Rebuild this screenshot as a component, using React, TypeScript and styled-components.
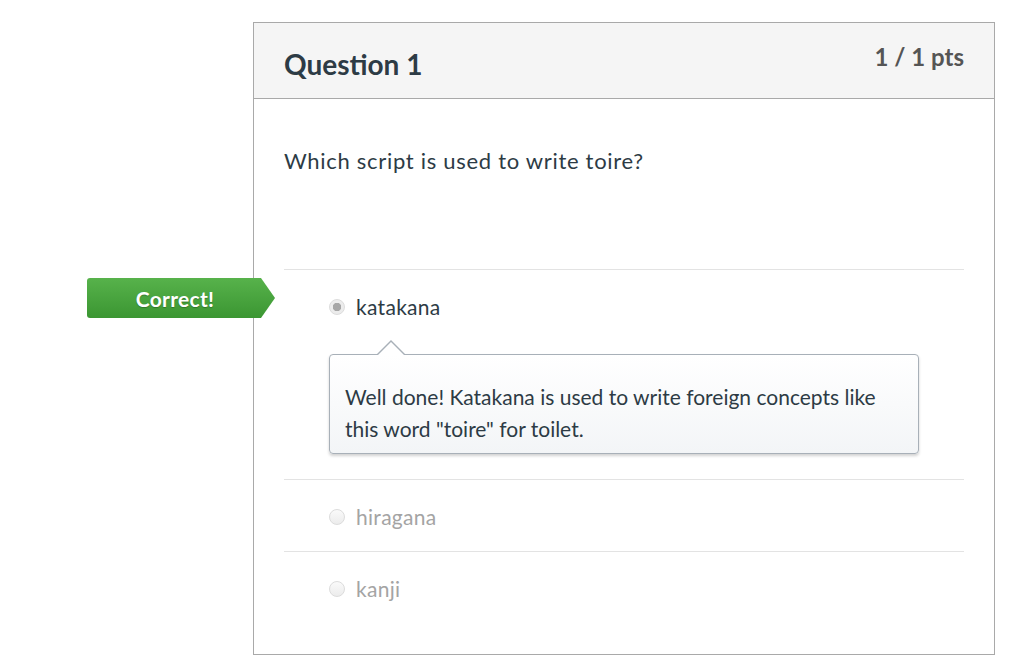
import styled, { createGlobalStyle } from 'styled-components';

const GlobalStyle = createGlobalStyle`
  html, body {
    margin: 0;
    padding: 0;
    background: #fff;
  }
  body {
    font-family: 'Lato', 'Liberation Sans', sans-serif;
    color: #2d3b45;
  }
`;

interface answerType {
  id: number;
  text: string;
  selected: boolean;
  comment?: string;
}

const answers: answerType[] = [
  {
    id: 1,
    text: 'katakana',
    selected: true,
    comment:
      'Well done! Katakana is used to write foreign concepts like this word "toire" for toilet.',
  },
  { id: 2, text: 'hiragana', selected: false },
  { id: 3, text: 'kanji', selected: false },
];

export default function App() {
  return (
    <>
      <GlobalStyle />
      <Page>
        <Card>
          <Header>
            <Title>Question 1</Title>
            <Points>1 / 1 pts</Points>
          </Header>
          <Body>
            <QuestionText>Which script is used to write toire?</QuestionText>
            <AnswerList>
              {answers.map((a) => (
                <AnswerRow key={a.id}>
                  {a.selected && <CorrectBadge>Correct!</CorrectBadge>}
                  <Label $selected={a.selected}>
                    <Radio $selected={a.selected} />
                    {a.text}
                  </Label>
                  {a.comment && <Comment>{a.comment}</Comment>}
                </AnswerRow>
              ))}
            </AnswerList>
          </Body>
        </Card>
      </Page>
    </>
  );
}

const Page = styled.div`
  padding: 22px 0 0 253px;
`;

const Card = styled.div`
  width: 740px;
  height: 631px;
  border: 1px solid #a9a9a9;
  background: #fff;
`;

const Header = styled.div`
  height: 76px;
  box-sizing: border-box;
  background: #f5f5f5;
  border-bottom: 1px solid #a9a9a9;
  display: flex;
  justify-content: space-between;
  padding: 0 30px;
`;

const Title = styled.div`
  font-size: 28px;
  font-weight: 700;
  color: #2d3b45;
  padding-top: 24px;
  line-height: 34px;
`;

const Points = styled.div`
  font-size: 24px;
  font-weight: 700;
  color: #555;
  padding-top: 20px;
  line-height: 28px;
`;

const Body = styled.div`
  padding: 0 30px;
`;

const QuestionText = styled.div`
  font-size: 22px;
  letter-spacing: 0.7px;
  line-height: 28px;
  padding-top: 48px;
  height: 122px;
`;

const AnswerList = styled.div`
  display: flex;
  flex-direction: column;
`;

const AnswerRow = styled.div`
  position: relative;
  border-top: 1px solid #e3e3e3;
  padding: 23px 0 20px 45px;
`;

const Label = styled.div<{ $selected: boolean }>`
  display: flex;
  align-items: center;
  gap: 11px;
  font-size: 21px;
  letter-spacing: 0.3px;
  line-height: 28px;
  color: ${({ $selected }) => ($selected ? '#2d3b45' : '#a4a4a4')};
`;

const Radio = styled.span<{ $selected: boolean }>`
  width: 16px;
  height: 16px;
  box-sizing: border-box;
  border-radius: 50%;
  border: 1px solid #dcdcdc;
  background: ${({ $selected }) =>
    $selected
      ? 'radial-gradient(circle, #a6a6a6 0 4px, #ececec 4.5px)'
      : 'linear-gradient(#fafafa, #ececec)'};
  flex-shrink: 0;
`;

const Comment = styled.div`
  position: relative;
  margin: 33px 45px 5px 0;
  padding: 26px 15px 8px;
  border: 1px solid #a8b0b8;
  border-radius: 4px;
  background: linear-gradient(#ffffff, #f3f5f7);
  box-shadow: 0 2px 3px rgba(0, 0, 0, 0.18);
  font-size: 21px;
  line-height: 32px;
  color: #2d3b45;

  &::before,
  &::after {
    content: '';
    position: absolute;
    left: 47px;
    width: 0;
    height: 0;
    border-left: 14px solid transparent;
    border-right: 14px solid transparent;
  }
  &::before {
    top: -15px;
    border-bottom: 14px solid #a8b0b8;
  }
  &::after {
    top: -13px;
    left: 48px;
    border-left-width: 13px;
    border-right-width: 13px;
    border-bottom: 13px solid #ffffff;
  }
`;

const CorrectBadge = styled.div`
  position: absolute;
  left: -197px;
  top: 8px;
  width: 188px;
  height: 40px;
  box-sizing: border-box;
  padding-right: 12px;
  display: flex;
  align-items: center;
  justify-content: center;
  background: linear-gradient(#57b24b, #3b9632);
  clip-path: polygon(0 0, 174px 0, 188px 50%, 174px 100%, 0 100%);
  border-radius: 3px 0 0 3px;
  color: #fff;
  font-size: 21px;
  letter-spacing: 0.3px;
  font-weight: 700;
  text-shadow: 0 1px 1px rgba(0, 0, 0, 0.25);
`;
